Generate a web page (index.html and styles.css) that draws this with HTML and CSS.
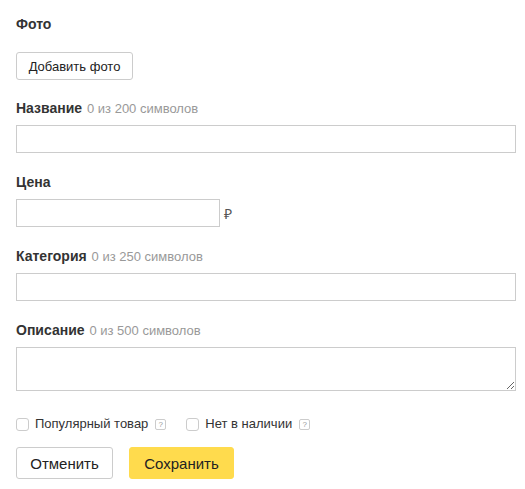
FILE: index.html
```html
<!DOCTYPE html>
<html lang="ru">
<head>
<meta charset="utf-8">
<link rel="stylesheet" href="styles.css">
</head>
<body>
<form class="form">
  <div class="field field-photo">
    <div class="label"><b>Фото</b></div>
    <button type="button" class="btn-add">Добавить фото</button>
  </div>
  <div class="field">
    <div class="label"><b>Название</b> <span class="count">0 из 200 символов</span></div>
    <input class="input" type="text">
  </div>
  <div class="field">
    <div class="label"><b>Цена</b></div>
    <div class="price-row">
      <input class="input input-price" type="text">
      <span class="currency">₽</span>
    </div>
  </div>
  <div class="field">
    <div class="label"><b>Категория</b> <span class="count">0 из 250 символов</span></div>
    <input class="input" type="text">
  </div>
  <div class="field field-desc">
    <div class="label"><b>Описание</b> <span class="count">0 из 500 символов</span></div>
    <textarea class="textarea"></textarea>
  </div>
  <div class="checks">
    <label class="check"><span class="box"></span><span class="check-text">Популярный товар</span><span class="hint">?</span></label>
    <label class="check"><span class="box"></span><span class="check-text">Нет в наличии</span><span class="hint">?</span></label>
  </div>
  <div class="actions">
    <button type="button" class="btn btn-cancel">Отменить</button>
    <button type="button" class="btn btn-save">Сохранить</button>
  </div>
</form>
</body>
</html>
```
FILE: styles.css
```css
html, body {
  margin: 0;
  padding: 0;
  background: #fff;
}
body {
  font-family: "Liberation Sans", Arial, sans-serif;
  color: #222;
  font-size: 13px;
}
.form {
  padding: 16px 0 0 16px;
  width: 500px;
  display: flex;
  flex-direction: column;
}
.field {
  display: flex;
  flex-direction: column;
  margin-bottom: 21px;
}
.field-photo {
  margin-bottom: 20px;
}
.field-photo .label {
  margin-bottom: 20px;
}
.label {
  line-height: 16px;
  height: 16px;
  margin-bottom: 9px;
  font-size: 14px;
  color: #333;
  white-space: nowrap;
}
.label b {
  font-weight: bold;
}
.count {
  color: #999;
  font-size: 13px;
  margin-left: 1px;
}
.btn-add {
  align-self: flex-start;
  height: 28px;
  width: 117px;
  padding: 0;
  border: 1px solid #ccc;
  border-radius: 3px;
  background: #fff;
  font-family: inherit;
  font-size: 13px;
  color: #222;
}
.input {
  box-sizing: border-box;
  height: 28px;
  width: 500px;
  margin: 0;
  border: 1px solid #ccc;
  border-radius: 0;
  padding: 0 6px;
  font-family: inherit;
  font-size: 13px;
  outline: none;
}
.price-row {
  display: flex;
  align-items: center;
}
.input-price {
  width: 204px;
}
.currency {
  margin-left: 4px;
  font-size: 14px;
  color: #555;
  line-height: 16px;
  padding-top: 2px;
}
.textarea {
  box-sizing: border-box;
  width: 500px;
  height: 44px;
  margin: 0;
  border: 1px solid #ccc;
  border-radius: 0;
  padding: 4px 6px;
  font-family: inherit;
  font-size: 13px;
  outline: none;
  display: block;
}
.field-desc {
  margin-bottom: 26px;
}
.checks {
  display: flex;
  align-items: center;
  height: 14px;
  gap: 20px;
  margin-bottom: 16px;
}
.check {
  display: flex;
  align-items: center;
  font-size: 13px;
  color: #333;
}
.box {
  box-sizing: border-box;
  width: 13px;
  height: 13px;
  border: 1px solid #ccc;
  border-radius: 3px;
  background: #fff;
}
.check-text {
  margin-left: 6px;
  line-height: 14px;
}
.hint {
  box-sizing: border-box;
  width: 11px;
  height: 11px;
  margin-left: 7px;
  border: 1px solid #ccc;
  border-radius: 2px;
  font-size: 8px;
  line-height: 9px;
  text-align: center;
  color: #999;
}
.actions {
  display: flex;
  gap: 16px;
}
.btn {
  box-sizing: border-box;
  height: 32px;
  padding: 0;
  border-radius: 3px;
  font-family: inherit;
  font-size: 15px;
  color: #222;
}
.btn-cancel {
  width: 97px;
  background: #fff;
  border: 1px solid #ccc;
}
.btn-save {
  width: 105px;
  background: #ffdb4d;
  border: 1px solid #ffdb4d;
}
```
